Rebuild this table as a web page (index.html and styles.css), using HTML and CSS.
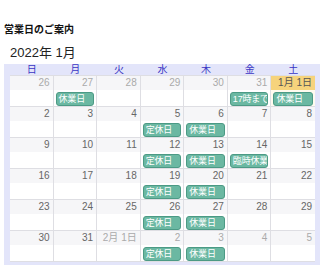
FILE: index.html
```html
<!DOCTYPE html>
<html lang="ja">
<head>
<meta charset="utf-8">
<link rel="stylesheet" href="styles.css">
</head>
<body>
<h2 class="title">営業日のご案内</h2>
<div class="month">2022年 1月</div>
<div class="cal">
  <div class="head">
    <div>日</div><div>月</div><div>火</div><div>水</div><div>木</div><div>金</div><div>土</div>
  </div>
  <div class="grid">
    <div class="cell other"><div class="num">26</div></div>
    <div class="cell other"><div class="num">27</div><div class="ev">休業日</div></div>
    <div class="cell other"><div class="num">28</div></div>
    <div class="cell other"><div class="num">29</div></div>
    <div class="cell other"><div class="num">30</div></div>
    <div class="cell other"><div class="num">31</div><div class="ev">17時まで</div></div>
    <div class="cell today"><div class="num">1月 1日</div><div class="ev">休業日</div></div>

    <div class="cell"><div class="num">2</div></div>
    <div class="cell"><div class="num">3</div></div>
    <div class="cell"><div class="num">4</div></div>
    <div class="cell"><div class="num">5</div><div class="ev">定休日</div></div>
    <div class="cell"><div class="num">6</div><div class="ev">休業日</div></div>
    <div class="cell"><div class="num">7</div></div>
    <div class="cell"><div class="num">8</div></div>

    <div class="cell"><div class="num">9</div></div>
    <div class="cell"><div class="num">10</div></div>
    <div class="cell"><div class="num">11</div></div>
    <div class="cell"><div class="num">12</div><div class="ev">定休日</div></div>
    <div class="cell"><div class="num">13</div><div class="ev">休業日</div></div>
    <div class="cell"><div class="num">14</div><div class="ev">臨時休業日</div></div>
    <div class="cell"><div class="num">15</div></div>

    <div class="cell"><div class="num">16</div></div>
    <div class="cell"><div class="num">17</div></div>
    <div class="cell"><div class="num">18</div></div>
    <div class="cell"><div class="num">19</div><div class="ev">定休日</div></div>
    <div class="cell"><div class="num">20</div><div class="ev">休業日</div></div>
    <div class="cell"><div class="num">21</div></div>
    <div class="cell"><div class="num">22</div></div>

    <div class="cell"><div class="num">23</div></div>
    <div class="cell"><div class="num">24</div></div>
    <div class="cell"><div class="num">25</div></div>
    <div class="cell"><div class="num">26</div><div class="ev">定休日</div></div>
    <div class="cell"><div class="num">27</div><div class="ev">休業日</div></div>
    <div class="cell"><div class="num">28</div></div>
    <div class="cell"><div class="num">29</div></div>

    <div class="cell"><div class="num">30</div></div>
    <div class="cell"><div class="num">31</div></div>
    <div class="cell other"><div class="num">2月 1日</div></div>
    <div class="cell other"><div class="num">2</div><div class="ev">定休日</div></div>
    <div class="cell other"><div class="num">3</div><div class="ev">休業日</div></div>
    <div class="cell other"><div class="num">4</div></div>
    <div class="cell other"><div class="num">5</div></div>
  </div>
</div>
</body>
</html>
```
FILE: styles.css
```css
html, body {
  margin: 0;
  padding: 0;
  background: #ffffff;
}
body {
  font-family: "Liberation Sans", "Noto Sans CJK JP", sans-serif;
  color: #222;
  padding: 0 0 0 4px;
}
.title {
  margin: 0;
  padding-top: 24px;
  font-size: 10px;
  line-height: 12px;
  font-weight: bold;
  color: #111;
}
.month {
  margin: 9px 0 0 6px;
  font-size: 13px;
  line-height: 16px;
  color: #222;
}
.cal {
  margin-top: 3px;
  width: 305px;
  padding: 0 5px 6px 6px;
  background: #e3e5fa;
}
.head {
  display: grid;
  grid-template-columns: repeat(7, 1fr);
  height: 11px;
}
.head div {
  text-align: center;
  font-size: 10px;
  line-height: 12px;
  color: #3a35c4;
}
.grid {
  display: grid;
  grid-template-columns: repeat(7, 1fr);
  grid-auto-rows: 31px;
  background: #fff;
  border-top: 1px solid #dedee3;
}
.cell {
  border-right: 1px solid #dedee3;
  border-bottom: 1px solid #dedee3;
  min-width: 0;
  overflow: hidden;
}
.cell:nth-child(7n) {
  border-right: none;
}
.num {
  height: 14px;
  background: #f6f6f8;
  text-align: right;
  padding-right: 3px;
  font-size: 10px;
  line-height: 14px;
  color: #666;
}
.other .num {
  color: #aaa;
}
.today .num {
  background: #f6d37c;
  color: #555;
}
.today {
  background: #fffbef;
}
.ev {
  margin: 2px 2px 0 2px;
  height: 12px;
  background: #6bb8a2;
  border: 1px solid #4c9a85;
  border-radius: 3px;
  color: #fff;
  font-size: 9px;
  letter-spacing: -0.2px;
  line-height: 12px;
  padding-left: 2px;
  white-space: nowrap;
  overflow: hidden;
}
```
